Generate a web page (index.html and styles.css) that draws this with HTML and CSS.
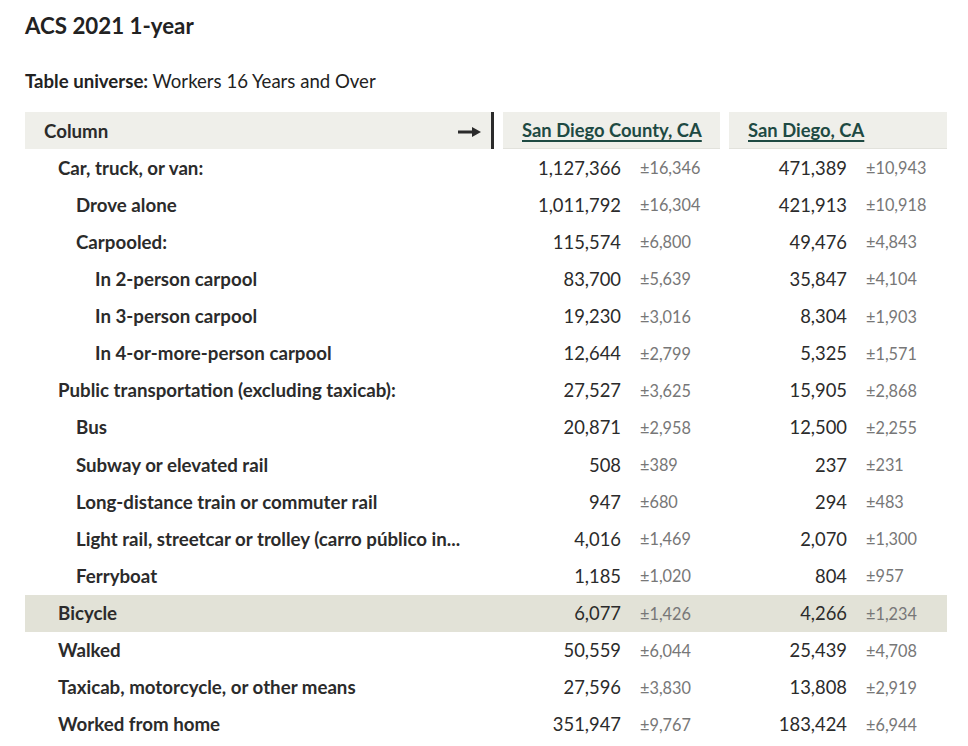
FILE: index.html
```html
<!DOCTYPE html>
<html>
<head>
<meta charset="utf-8">
<link rel="stylesheet" href="styles.css">
</head>
<body>
<div class="page">
  <h1 class="title">ACS 2021 1-year</h1>
  <p class="universe"><b>Table universe:</b> Workers 16 Years and Over</p>
  <div class="table">
    <div class="row head">
      <div class="label-head">
        <span>Column</span>
        <svg class="arrow" width="23" height="12" viewBox="0 0 23 12"><rect x="0" y="4.5" width="16" height="3" fill="#2b2b2b"/><polygon points="14,1 23,6 14,11" fill="#2b2b2b"/></svg>
      </div>
      <div class="bar"></div>
      <div class="geo-head"><a href="#">San Diego County, CA</a></div>
      <div class="gap"></div>
      <div class="geo-head"><a href="#">San Diego, CA</a></div>
    </div>

    <div class="row"><div class="label l1">Car, truck, or van:</div><div class="sp"></div><div class="val"><span class="est">1,127,366</span><span class="moe">±16,346</span></div><div class="gap"></div><div class="val"><span class="est">471,389</span><span class="moe">±10,943</span></div></div>
    <div class="row"><div class="label l2">Drove alone</div><div class="sp"></div><div class="val"><span class="est">1,011,792</span><span class="moe">±16,304</span></div><div class="gap"></div><div class="val"><span class="est">421,913</span><span class="moe">±10,918</span></div></div>
    <div class="row"><div class="label l2">Carpooled:</div><div class="sp"></div><div class="val"><span class="est">115,574</span><span class="moe">±6,800</span></div><div class="gap"></div><div class="val"><span class="est">49,476</span><span class="moe">±4,843</span></div></div>
    <div class="row"><div class="label l3">In 2-person carpool</div><div class="sp"></div><div class="val"><span class="est">83,700</span><span class="moe">±5,639</span></div><div class="gap"></div><div class="val"><span class="est">35,847</span><span class="moe">±4,104</span></div></div>
    <div class="row"><div class="label l3">In 3-person carpool</div><div class="sp"></div><div class="val"><span class="est">19,230</span><span class="moe">±3,016</span></div><div class="gap"></div><div class="val"><span class="est">8,304</span><span class="moe">±1,903</span></div></div>
    <div class="row"><div class="label l3">In 4-or-more-person carpool</div><div class="sp"></div><div class="val"><span class="est">12,644</span><span class="moe">±2,799</span></div><div class="gap"></div><div class="val"><span class="est">5,325</span><span class="moe">±1,571</span></div></div>
    <div class="row"><div class="label l1">Public transportation (excluding taxicab):</div><div class="sp"></div><div class="val"><span class="est">27,527</span><span class="moe">±3,625</span></div><div class="gap"></div><div class="val"><span class="est">15,905</span><span class="moe">±2,868</span></div></div>
    <div class="row"><div class="label l2">Bus</div><div class="sp"></div><div class="val"><span class="est">20,871</span><span class="moe">±2,958</span></div><div class="gap"></div><div class="val"><span class="est">12,500</span><span class="moe">±2,255</span></div></div>
    <div class="row"><div class="label l2">Subway or elevated rail</div><div class="sp"></div><div class="val"><span class="est">508</span><span class="moe">±389</span></div><div class="gap"></div><div class="val"><span class="est">237</span><span class="moe">±231</span></div></div>
    <div class="row"><div class="label l2">Long-distance train or commuter rail</div><div class="sp"></div><div class="val"><span class="est">947</span><span class="moe">±680</span></div><div class="gap"></div><div class="val"><span class="est">294</span><span class="moe">±483</span></div></div>
    <div class="row"><div class="label l2">Light rail, streetcar or trolley (carro público in...</div><div class="sp"></div><div class="val"><span class="est">4,016</span><span class="moe">±1,469</span></div><div class="gap"></div><div class="val"><span class="est">2,070</span><span class="moe">±1,300</span></div></div>
    <div class="row"><div class="label l2">Ferryboat</div><div class="sp"></div><div class="val"><span class="est">1,185</span><span class="moe">±1,020</span></div><div class="gap"></div><div class="val"><span class="est">804</span><span class="moe">±957</span></div></div>
    <div class="row hl"><div class="label l1">Bicycle</div><div class="sp"></div><div class="val"><span class="est">6,077</span><span class="moe">±1,426</span></div><div class="gap"></div><div class="val"><span class="est">4,266</span><span class="moe">±1,234</span></div></div>
    <div class="row"><div class="label l1">Walked</div><div class="sp"></div><div class="val"><span class="est">50,559</span><span class="moe">±6,044</span></div><div class="gap"></div><div class="val"><span class="est">25,439</span><span class="moe">±4,708</span></div></div>
    <div class="row"><div class="label l1">Taxicab, motorcycle, or other means</div><div class="sp"></div><div class="val"><span class="est">27,596</span><span class="moe">±3,830</span></div><div class="gap"></div><div class="val"><span class="est">13,808</span><span class="moe">±2,919</span></div></div>
    <div class="row"><div class="label l1">Worked from home</div><div class="sp"></div><div class="val"><span class="est">351,947</span><span class="moe">±9,767</span></div><div class="gap"></div><div class="val"><span class="est">183,424</span><span class="moe">±6,944</span></div></div>
  </div>
</div>
</body>
</html>
```

FILE: styles.css
```css
html, body {
  margin: 0;
  padding: 0;
  background: #fff;
}
body {
  font-family: Lato, "Open Sans", sans-serif;
  color: #2b2b2b;
}
.page {
  padding: 0 21px 0 25px;
}
.title {
  margin: 0;
  padding-top: 12px;
  font-size: 22.3px;
  line-height: 28px;
  font-weight: 700;
  color: #222;
}
.universe {
  margin: 0;
  padding-top: 29px;
  font-size: 18.6px;
  line-height: 24px;
  color: #222;
}
.universe b {
  font-weight: 700;
}
.table {
  margin-top: 19px;
}
.row {
  display: grid;
  grid-template-columns: 466px 12px 217px 9px 218px;
  height: 37.13px;
  align-items: center;
}
.row.head {
  height: 37px;
  align-items: stretch;
}
.label-head {
  background: #efefea;
  display: flex;
  align-items: center;
  justify-content: space-between;
  padding: 0 10px 0 19px;
  font-size: 18.7px;
  font-weight: 700;
  color: #2b2b2b;
}
.arrow {
  display: block;
  margin-top: 3px;
}
.bar {
  background: #fff;
  position: relative;
}
.bar::before {
  content: "";
  position: absolute;
  left: 0;
  top: 0;
  bottom: 0;
  width: 3px;
  background: #2b2b2b;
}
.geo-head {
  background: #efefea;
  border-bottom: 1px solid #e2e2dc;
  display: flex;
  align-items: center;
  padding-left: 19px;
  font-size: 18.4px;
  font-weight: 700;
}
.geo-head a {
  color: #1e4a43;
  text-decoration: underline;
  text-underline-offset: 3px;
  text-decoration-thickness: 1.5px;
}
.row.hl {
  background: #e2e2d7;
}
.label {
  font-size: 18.7px;
  font-weight: 700;
  color: #2b2b2b;
  white-space: nowrap;
}
.l1 { padding-left: 33px; }
.l2 { padding-left: 51px; }
.l3 { padding-left: 70px; }
.val {
  display: grid;
  grid-template-columns: 118px 80px;
  column-gap: 19px;
  align-items: center;
}
.est {
  text-align: right;
  font-size: 18.4px;
  color: #2b2b2b;
}
.moe {
  font-size: 16.3px;
  color: #777;
}
```
